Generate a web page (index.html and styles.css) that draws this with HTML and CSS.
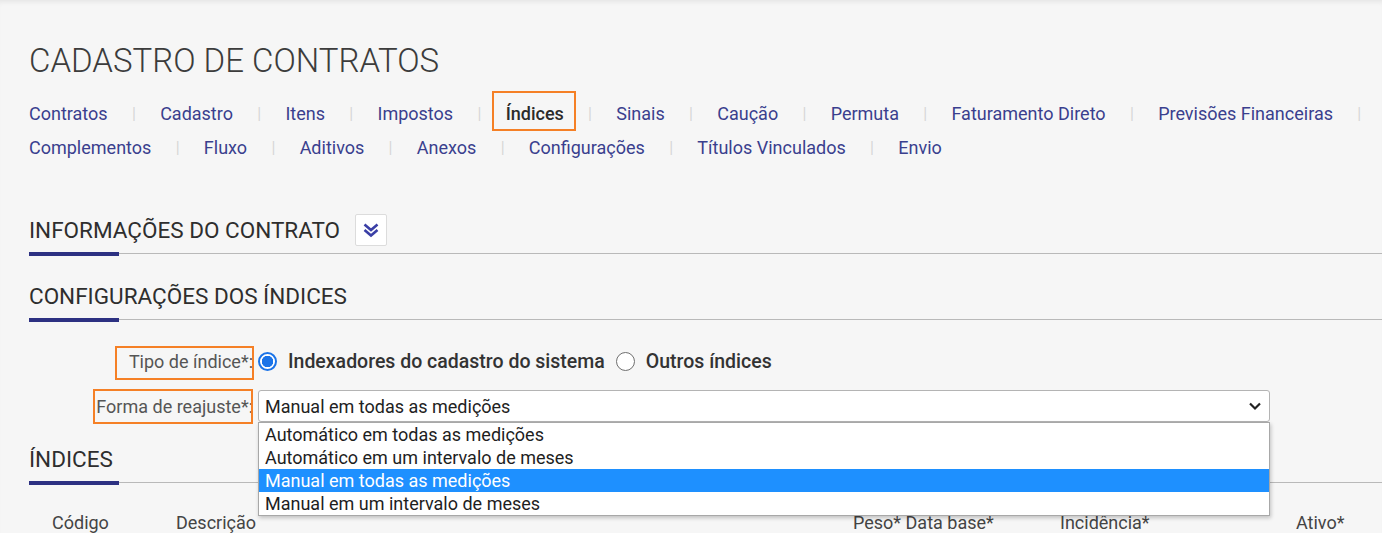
FILE: index.html
```html
<!DOCTYPE html>
<html lang="pt-BR">
<head>
<meta charset="utf-8">
<title>Cadastro de Contratos</title>
<link rel="stylesheet" href="styles.css">
</head>
<body>
<div class="page">
  <h1 class="title">CADASTRO DE CONTRATOS</h1>

  <nav class="tabs">
    <div class="tab-row">
      <a class="tab">Contratos</a><span class="sep">|</span>
      <a class="tab">Cadastro</a><span class="sep">|</span>
      <a class="tab">Itens</a><span class="sep">|</span>
      <a class="tab">Impostos</a><span class="sep">|</span>
      <a class="tab active">Índices</a><span class="sep">|</span>
      <a class="tab">Sinais</a><span class="sep">|</span>
      <a class="tab">Caução</a><span class="sep">|</span>
      <a class="tab">Permuta</a><span class="sep">|</span>
      <a class="tab">Faturamento Direto</a><span class="sep">|</span>
      <a class="tab">Previsões Financeiras</a><span class="sep">|</span>
    </div>
    <div class="tab-row">
      <a class="tab">Complementos</a><span class="sep">|</span>
      <a class="tab">Fluxo</a><span class="sep">|</span>
      <a class="tab">Aditivos</a><span class="sep">|</span>
      <a class="tab">Anexos</a><span class="sep">|</span>
      <a class="tab">Configurações</a><span class="sep">|</span>
      <a class="tab">Títulos Vinculados</a><span class="sep">|</span>
      <a class="tab">Envio</a>
    </div>
  </nav>

  <section class="section first">
    <div class="section-head">
      <h2 class="section-title">INFORMAÇÕES DO CONTRATO</h2>
      <button class="toggle" type="button" aria-label="Expandir">
        <svg width="18" height="16" viewBox="0 0 18 16">
          <path d="M2.5 2.5 L9 8 L15.5 2.5" fill="none" stroke="#3a3fa6" stroke-width="2.6" stroke-linejoin="miter"/>
          <path d="M2.5 8 L9 13.5 L15.5 8" fill="none" stroke="#3a3fa6" stroke-width="2.6" stroke-linejoin="miter"/>
        </svg>
      </button>
    </div>
    <div class="rule"></div>
  </section>

  <section class="section">
    <div class="section-head">
      <h2 class="section-title">CONFIGURAÇÕES DOS ÍNDICES</h2>
    </div>
    <div class="rule"></div>

    <div class="form">
      <div class="form-row">
        <label class="form-label"><span class="mark mark-tipo">Tipo de índice*:</span></label>
        <div class="radios">
          <span class="radio checked"></span>
          <span class="radio-text">Indexadores do cadastro do sistema</span>
          <span class="radio"></span>
          <span class="radio-text">Outros índices</span>
        </div>
      </div>
      <div class="form-row">
        <label class="form-label"><span class="mark mark-forma">Forma de reajuste*:</span></label>
        <div class="select-wrap">
          <div class="select">
            <span>Manual em todas as medições</span>
            <svg class="caret" width="14" height="10" viewBox="0 0 14 10">
              <path d="M2 2.5 L7 7.5 L12 2.5" fill="none" stroke="#222" stroke-width="2.2"/>
            </svg>
          </div>
          <ul class="options">
            <li>Automático em todas as medições</li>
            <li>Automático em um intervalo de meses</li>
            <li class="selected">Manual em todas as medições</li>
            <li>Manual em um intervalo de meses</li>
          </ul>
        </div>
      </div>
    </div>
  </section>

  <section class="section third">
    <div class="section-head">
      <h2 class="section-title">ÍNDICES</h2>
    </div>
    <div class="rule"></div>
    <div class="table-head">
      <span class="col col-codigo">Código</span>
      <span class="col col-desc">Descrição</span>
      <span class="col col-peso">Peso* Data base*</span>
      <span class="col col-inc">Incidência*</span>
      <span class="col col-ativo">Ativo*</span>
    </div>
  </section>
</div>
</body>
</html>
```

FILE: styles.css
```css
* { box-sizing: border-box; }

html, body {
  margin: 0;
  padding: 0;
  background: #ffffff;
}

body {
  font-family: Roboto, "Liberation Sans", Arial, sans-serif;
  color: #333;
}

.page {
  height: 533px;
  overflow: hidden;
  background: #f6f6f6;
  padding-left: 29px;
  padding-top: 41px;
  box-shadow: inset 0 5px 5px -3px rgba(0, 0, 0, 0.07);
}

.title {
  margin: 0;
  font-size: 33px;
  line-height: 40px;
  font-weight: 300;
  color: #3c3c3c;
}

.tabs {
  margin-top: 16px;
}

.tab-row {
  display: flex;
  align-items: center;
  height: 34px;
  font-size: 18px;
  line-height: 34px;
  white-space: nowrap;
}

.tab {
  color: #3a3f8e;
  text-decoration: none;
}

.tab.active {
  position: relative;
  color: #2b2b2b;
  font-weight: 500;
}

.tab.active::after {
  content: "";
  position: absolute;
  left: -14px;
  right: -12px;
  top: -6px;
  bottom: 0;
  border: 2px solid #f58026;
}

.sep {
  color: #d6d6d6;
  font-size: 16px;
  padding: 0 24.3px;
}

.section {
  margin-top: 24px;
}

.section.first {
  margin-top: 49px;
}

.section.third {
  margin-top: 21px;
}

.section-head {
  display: flex;
  align-items: center;
  height: 32px;
  gap: 15px;
}

.section-title {
  margin: 0;
  font-size: 22.5px;
  font-weight: 400;
  color: #2e2e2e;
  line-height: 32px;
}

.toggle {
  width: 32px;
  height: 32px;
  padding: 0;
  border: 1px solid #dcdcdc;
  background: #ffffff;
  display: flex;
  align-items: center;
  justify-content: center;
  border-radius: 2px;
}

.rule {
  margin-top: 6px;
  height: 4px;
  background:
    linear-gradient(#2d3182, #2d3182) left top / 90px 4px no-repeat,
    linear-gradient(#b9b9b9, #b9b9b9) left 1px / 100% 1px no-repeat;
}

.form {
  margin-top: 23px;
  display: flex;
  flex-direction: column;
  gap: 13px;
}

.form-row {
  display: flex;
  align-items: center;
  gap: 5px;
}

.form-label {
  width: 224px;
  flex: none;
  display: flex;
  justify-content: flex-end;
  font-size: 18px;
  color: #555;
  white-space: nowrap;
}

.mark {
  position: relative;
}

.mark::after {
  content: "";
  position: absolute;
  border: 2px solid #f58026;
}

.mark-tipo::after {
  left: -14px;
  right: -1px;
  top: -5px;
  bottom: -8px;
}

.mark-forma::after {
  left: -3px;
  right: 0;
  top: -7px;
  bottom: -7px;
}

.radios {
  display: flex;
  align-items: center;
  height: 32px;
  font-size: 19.5px;
  font-weight: 500;
  color: #333;
}

.radio {
  width: 19px;
  height: 19px;
  border-radius: 50%;
  border: 1.5px solid #6f6f6f;
  background: #fff;
  margin-right: 11px;
  flex: none;
}

.radio.checked {
  border: 2px solid #1a73e8;
  background: radial-gradient(circle, #1a73e8 0 5.5px, #fff 6px);
}

.radio-text {
  margin-right: 11px;
}

.select-wrap {
  position: relative;
  width: 1012px;
}

.select {
  height: 32px;
  background: #fff;
  border: 1px solid #b4b4b4;
  border-radius: 3px;
  display: flex;
  align-items: center;
  justify-content: space-between;
  padding: 0 7px 0 6px;
  font-size: 18px;
  color: #222;
}

.options {
  position: absolute;
  left: 0;
  right: 0;
  top: 32px;
  margin: 0;
  padding: 0;
  list-style: none;
  background: #fff;
  border: 1px solid #a8a8a8;
  box-shadow: 1px 2px 4px rgba(0, 0, 0, 0.22);
  font-size: 18px;
  color: #1e1e1e;
  z-index: 5;
}

.options li {
  height: 23px;
  line-height: 23px;
  padding: 0 6px;
}

.options li.selected {
  background: #1e90ff;
  color: #fff;
}

.table-head {
  margin-top: 26px;
  display: grid;
  grid-template-columns: 124px 677px 207px 236px auto;
  font-size: 18px;
  color: #444;
  padding-left: 23px;
  line-height: 24px;
}
```
